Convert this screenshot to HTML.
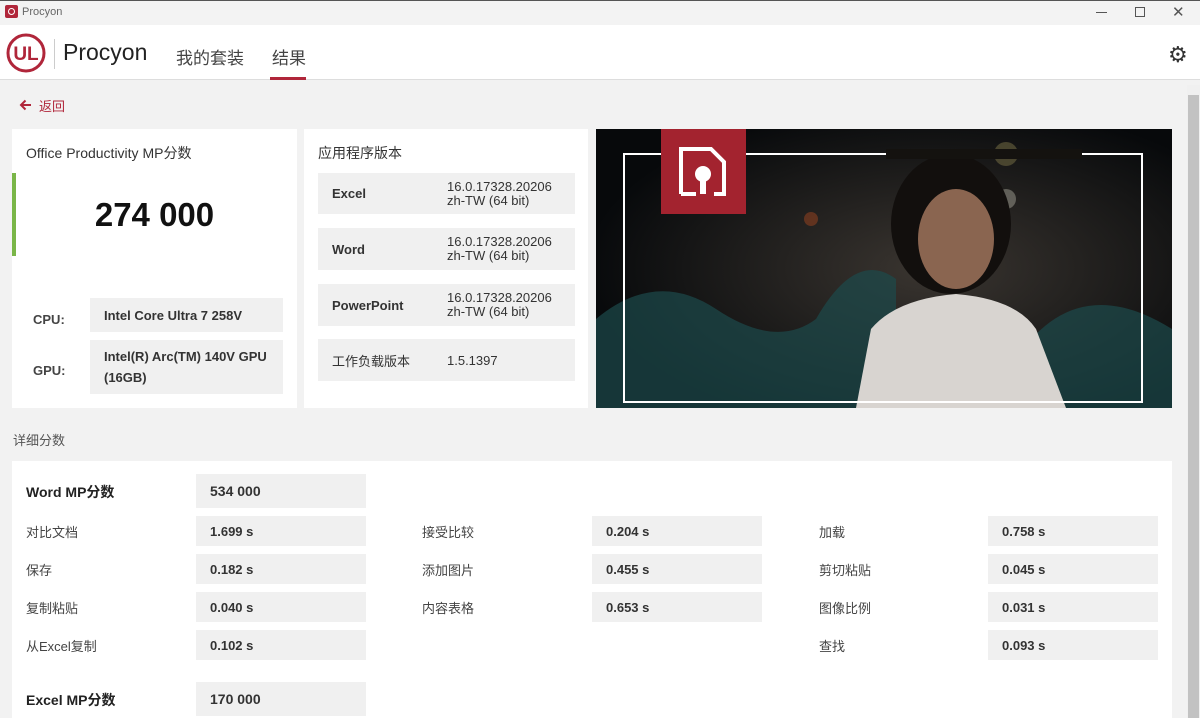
<!DOCTYPE html><html><head><meta charset="utf-8"><style>
*{box-sizing:border-box;margin:0;padding:0}
body{width:1200px;height:718px;overflow:hidden;background:#f2f2f2;font-family:"Liberation Sans","Noto Sans CJK SC",sans-serif;color:#222;position:relative}
.a{position:absolute}
.box{position:absolute;background:#f0f0f0;font-size:13px;font-weight:bold;color:#333;padding-left:14px;display:flex;align-items:center}
.lbl{position:absolute;font-size:13px;color:#444}
</style></head><body>
<div class="a" style="left:0;top:0;width:1200px;height:25px;background:#f3f3f3;border-top:1px solid #555"></div>
<div class="a" style="left:5px;top:5px;width:13px;height:13px;background:#b0263a;border-radius:2px"></div>
<div class="a" style="left:8px;top:8px;width:7px;height:7px;border:1.5px solid #fff;border-radius:50%"></div>
<div class="a" style="left:22px;top:6px;font-size:11px;color:#666">Procyon</div>
<div class="a" style="left:1096px;top:12px;width:11px;height:1px;background:#555"></div>
<div class="a" style="left:1135px;top:7px;width:10px;height:10px;border:1px solid #555"></div>
<div class="a" style="left:1172px;top:3px;font-size:15px;color:#555">✕</div>
<div class="a" style="left:0;top:25px;width:1200px;height:55px;background:#fff;border-bottom:1px solid #ddd"></div>
<svg class="a" style="left:6px;top:33px" width="40" height="40" viewBox="0 0 40 40"><circle cx="20" cy="20" r="18" fill="none" stroke="#b0263a" stroke-width="3"/><text x="20" y="27" text-anchor="middle" font-family="Liberation Sans" font-weight="bold" font-size="19" fill="#b0263a">UL</text></svg>
<div class="a" style="left:54px;top:39px;width:1px;height:30px;background:#ccc"></div>
<div class="a" style="left:63px;top:39px;font-size:23px;color:#222">Procyon</div>
<div class="a" style="left:176px;top:44px;font-size:17px;color:#444">我的套装</div>
<div class="a" style="left:272px;top:44px;font-size:17px;color:#444">结果</div>
<div class="a" style="left:270px;top:77px;width:36px;height:3px;background:#b0263a"></div>
<div class="a" style="left:1168px;top:42px;font-size:22px;color:#333">⚙</div>
<div class="a" style="left:1187px;top:85px;width:13px;height:633px;background:#f0f0f0"></div>
<div class="a" style="left:1188px;top:95px;width:11px;height:623px;background:#c2c2c2"></div>
<svg class="a" style="left:19px;top:99px" width="13" height="12" viewBox="0 0 13 12"><path d="M12 6H2M6.5 1.5L2 6l4.5 4.5" fill="none" stroke="#b0263a" stroke-width="2"/></svg>
<div class="a" style="left:39px;top:96px;font-size:13px;color:#b0263a">返回</div>

<div class="a" style="left:12px;top:129px;width:285px;height:279px;background:#fff"></div>
<div class="a" style="left:26px;top:143px;font-size:14px;color:#333">Office Productivity MP分数</div>
<div class="a" style="left:12px;top:173px;width:4px;height:83px;background:#7ab648"></div>
<div class="a" style="left:12px;top:196px;width:285px;text-align:center;font-size:33px;font-weight:bold;color:#111">274 000</div>
<div class="lbl" style="left:33px;top:312px;font-weight:bold">CPU:</div>
<div class="box" style="left:90px;top:298px;width:193px;height:34px">Intel Core Ultra 7 258V</div>
<div class="lbl" style="left:33px;top:363px;font-weight:bold">GPU:</div>
<div class="box" style="left:90px;top:340px;width:193px;height:54px;line-height:21px">Intel(R) Arc(TM) 140V GPU<br>(16GB)</div>

<div class="a" style="left:304px;top:129px;width:284px;height:279px;background:#fff"></div>
<div class="a" style="left:318px;top:143px;font-size:14px;color:#333">应用程序版本</div>
<div class="box" style="left:318px;top:173px;width:257px;height:41px;font-weight:normal"><b style="width:115px">Excel</b><span style="line-height:14px">16.0.17328.20206<br>zh-TW (64 bit)</span></div>
<div class="box" style="left:318px;top:228px;width:257px;height:42px;font-weight:normal"><b style="width:115px">Word</b><span style="line-height:14px">16.0.17328.20206<br>zh-TW (64 bit)</span></div>
<div class="box" style="left:318px;top:284px;width:257px;height:42px;font-weight:normal"><b style="width:115px">PowerPoint</b><span style="line-height:14px">16.0.17328.20206<br>zh-TW (64 bit)</span></div>
<div class="box" style="left:318px;top:339px;width:257px;height:42px;font-weight:normal"><span style="width:115px">工作负载版本</span>1.5.1397</div>

<svg class="a" style="left:596px;top:129px" width="576" height="279" viewBox="0 0 576 279">
<defs><radialGradient id="g" cx="0.58" cy="0.5" r="0.6"><stop offset="0" stop-color="#3a3530"/><stop offset="1" stop-color="#07090b"/></radialGradient></defs>
<rect width="576" height="279" fill="url(#g)"/>
<circle cx="410" cy="25" r="12" fill="#6b6440" opacity=".6"/><circle cx="410" cy="70" r="10" fill="#8c8a80" opacity=".6"/><circle cx="215" cy="90" r="7" fill="#8a4020" opacity=".6"/>
<path d="M0 190 Q60 140 120 180 T220 190 Q260 120 300 150 L300 279 L0 279Z" fill="#1c4a4c" opacity=".7"/>
<path d="M420 230 Q480 140 576 200 L576 279 L420 279Z" fill="#1c4a4c" opacity=".7"/>
<ellipse cx="355" cy="95" rx="60" ry="70" fill="#120f0d"/>
<ellipse cx="360" cy="110" rx="38" ry="50" fill="#8a6550"/>
<path d="M260 279 L275 200 Q300 170 360 165 Q420 170 440 200 L470 279Z" fill="#d8d4d0"/>
<rect x="28" y="25" width="518" height="248" fill="none" stroke="#fff" stroke-width="2"/>
<rect x="290" y="20" width="196" height="10" fill="#14120f"/>
<rect x="65" y="0" width="85" height="85" fill="#a3232f"/>
<path d="M85 65 V20 H115 L128 33 V65 H118 M100 65 H85" fill="none" stroke="#fff" stroke-width="4"/>
<circle cx="107" cy="45" r="8" fill="#fff"/><rect x="104" y="48" width="6" height="17" fill="#fff"/>
</svg>

<div class="a" style="left:13px;top:430px;font-size:13px;color:#555">详细分数</div>
<div class="a" style="left:12px;top:461px;width:1160px;height:257px;background:#fff"></div>
<div class="a" style="left:26px;top:482px;font-size:14px;font-weight:bold;color:#222">Word MP分数</div>
<div class="box" style="left:196px;top:474px;width:170px;height:34px;font-size:14px">534 000</div>
<div class="lbl" style="left:26px;top:522px">对比文档</div><div class="box" style="left:196px;top:516px;width:170px;height:30px">1.699 s</div>
<div class="lbl" style="left:422px;top:522px">接受比较</div><div class="box" style="left:592px;top:516px;width:170px;height:30px">0.204 s</div>
<div class="lbl" style="left:819px;top:522px">加载</div><div class="box" style="left:988px;top:516px;width:170px;height:30px">0.758 s</div>
<div class="lbl" style="left:26px;top:560px">保存</div><div class="box" style="left:196px;top:554px;width:170px;height:30px">0.182 s</div>
<div class="lbl" style="left:422px;top:560px">添加图片</div><div class="box" style="left:592px;top:554px;width:170px;height:30px">0.455 s</div>
<div class="lbl" style="left:819px;top:560px">剪切粘贴</div><div class="box" style="left:988px;top:554px;width:170px;height:30px">0.045 s</div>
<div class="lbl" style="left:26px;top:598px">复制粘贴</div><div class="box" style="left:196px;top:592px;width:170px;height:30px">0.040 s</div>
<div class="lbl" style="left:422px;top:598px">内容表格</div><div class="box" style="left:592px;top:592px;width:170px;height:30px">0.653 s</div>
<div class="lbl" style="left:819px;top:598px">图像比例</div><div class="box" style="left:988px;top:592px;width:170px;height:30px">0.031 s</div>
<div class="lbl" style="left:26px;top:636px">从Excel复制</div><div class="box" style="left:196px;top:630px;width:170px;height:30px">0.102 s</div>
<div class="lbl" style="left:819px;top:636px">查找</div><div class="box" style="left:988px;top:630px;width:170px;height:30px">0.093 s</div>
<div class="a" style="left:26px;top:690px;font-size:14px;font-weight:bold;color:#222">Excel MP分数</div>
<div class="box" style="left:196px;top:682px;width:170px;height:34px;font-size:14px">170 000</div>
</body></html>
